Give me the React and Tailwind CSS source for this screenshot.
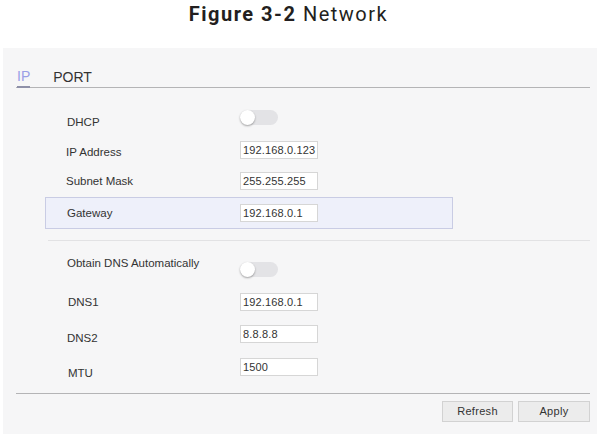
import React from "react";

const font = { fontFamily: '"Liberation Sans", Arial, sans-serif' };

function Toggle() {
  return (
    <div className="relative w-[38px] h-[15px] rounded-full bg-[#e3e3e6]">
      <div className="absolute left-0 top-0 w-[15px] h-[15px] rounded-full bg-white shadow-[0_1px_2px_rgba(0,0,0,0.35)]" />
    </div>
  );
}

function Input({ value }) {
  return (
    <div className="w-[78px] h-[18px] bg-white border border-[#d6d6d6] flex items-center pl-[2px] text-[11px] tracking-[0.15px] text-[#333] overflow-hidden whitespace-nowrap">
      {value}
    </div>
  );
}

export default function App() {
  return (
    <div className="w-[603px] h-[443px] bg-white flex flex-col" style={font}>
      <div className="h-[48px] flex justify-center pr-[26px]">
        <div
          className="leading-[28px] text-[20px] tracking-[1.5px] text-[#231f20]"
          style={{ fontFamily: 'Roboto, "Liberation Sans", sans-serif' }}
        >
          <span className="font-bold">Figure 3-2</span> Network
        </div>
      </div>

      <div className="ml-[3px] w-[594px] h-[386px] bg-[#f6f6f7] flex flex-col">
        {/* tabs */}
        <div className="ml-[13px] w-[574px] h-[40px] flex items-end border-b border-[#b4b4b6]">
          <div className="ml-[1px] pb-[2px] border-b-2 border-[#8e90a8] mb-[-1px] text-[14px] leading-[16px] text-[#9a9fe6]">
            IP
          </div>
          <div className="ml-[23px] pb-[2px] text-[14px] leading-[16px] text-[#333]">PORT</div>
        </div>

        <div className="flex flex-col text-[11.5px] text-[#333]">
          {/* DHCP */}
          <div className="mt-[22px] h-[16px] pl-[64px] flex items-start">
            <div className="w-[173px] mt-[6px] leading-[13px]">DHCP</div>
            <Toggle />
          </div>
          {/* IP Address */}
          <div className="mt-[15px] h-[18px] pl-[63px] flex items-center">
            <div className="w-[174px] pt-[4px] leading-[13px]">IP Address</div>
            <Input value="192.168.0.123" />
          </div>
          {/* Subnet */}
          <div className="mt-[13px] h-[18px] pl-[63px] flex items-center">
            <div className="w-[174px] leading-[13px]">Subnet Mask</div>
            <Input value="255.255.255" />
          </div>
          {/* Gateway */}
          <div className="mt-[7px] ml-[42px] w-[408px] h-[32px] bg-[#eef0fa] border border-[#c9cce4] pl-[21px] flex items-center">
            <div className="w-[173px] leading-[13px]">Gateway</div>
            <Input value="192.168.0.1" />
          </div>
          {/* separator */}
          <div className="mt-[11px] ml-[45px] w-[542px] h-px bg-[#e2e2e4]" />
          {/* Obtain DNS */}
          <div className="mt-[16px] h-[20px] pl-[64px] flex items-start">
            <div className="w-[173px] leading-[13px]">Obtain DNS Automatically</div>
            <div className="mt-[5px]">
              <Toggle />
            </div>
          </div>
          {/* DNS1 */}
          <div className="mt-[16px] h-[18px] pl-[65px] flex items-center">
            <div className="w-[172px] leading-[13px]">DNS1</div>
            <Input value="192.168.0.1" />
          </div>
          {/* DNS2 */}
          <div className="mt-[14px] h-[18px] pl-[64px] flex items-center">
            <div className="w-[173px] pt-[8px] leading-[13px]">DNS2</div>
            <Input value="8.8.8.8" />
          </div>
          {/* MTU */}
          <div className="mt-[15px] h-[18px] pl-[65px] flex items-center">
            <div className="w-[172px] pt-[12px] leading-[13px]">MTU</div>
            <Input value="1500" />
          </div>
        </div>

        {/* bottom line */}
        <div className="mt-[17px] ml-[13px] w-[574px] h-px bg-[#b4b4b6]" />

        {/* buttons */}
        <div className="mt-[7px] pr-[7px] flex justify-end gap-[5px]">
          <button className="w-[71px] h-[21px] bg-[#ececec] border border-[#d2d2d2] text-[11px] tracking-[0.3px] text-[#333]">
            Refresh
          </button>
          <button className="w-[72px] h-[21px] bg-[#ececec] border border-[#d2d2d2] text-[11px] tracking-[0.3px] text-[#333]">
            Apply
          </button>
        </div>
      </div>
    </div>
  );
}
